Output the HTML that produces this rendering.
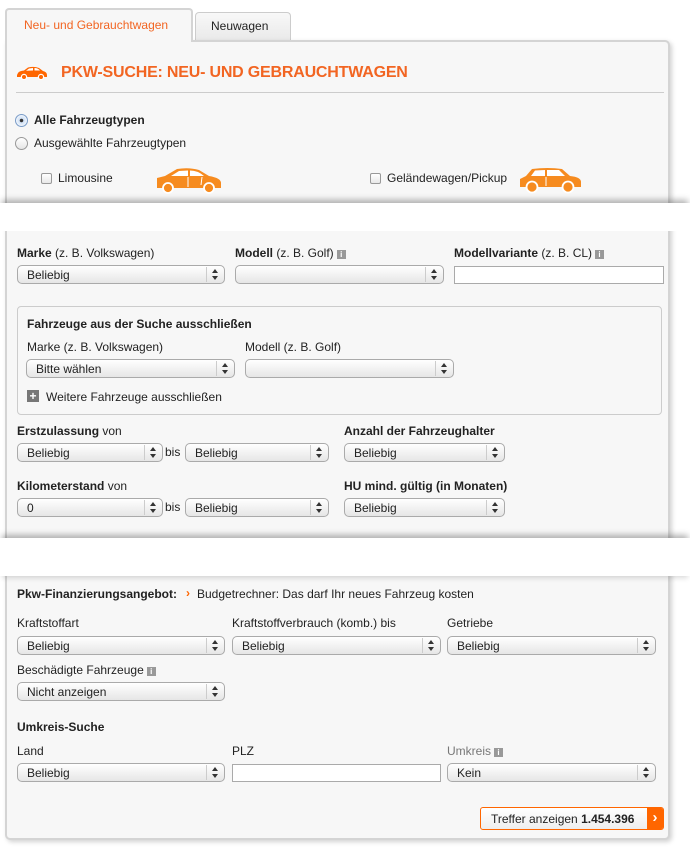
<!DOCTYPE html><html><head><meta charset="utf-8"><style>
*{box-sizing:border-box}
body{margin:0;width:690px;height:854px;background:#fff;font-family:"Liberation Sans",sans-serif;font-size:12px;color:#222;position:relative;overflow:hidden}
.a{position:absolute;white-space:nowrap}
.panel{position:absolute;left:5px;width:665px;background:#f7f7f7;border:2px solid #d4d4d4;box-shadow:2px 2px 5px rgba(0,0,0,.18)}
.sel{position:absolute;height:19px;border:1px solid #aaa;border-radius:5px;background:linear-gradient(#fff,#e6e6e6);font-size:12px;padding:2px 0 0 9px;color:#222}
.sel:after{content:"";position:absolute;right:17px;top:1px;bottom:1px;border-left:1px solid #ccc}
.sel i{position:absolute;right:6px;top:3px;width:0;height:0;border:3px solid transparent;border-bottom:4px solid #333;border-top:0}
.sel b{position:absolute;right:6px;top:10px;width:0;height:0;border:3px solid transparent;border-top:4px solid #333;border-bottom:0}
.inp{position:absolute;height:18px;border:1px solid #aaa;background:#fff}
.bd{font-weight:bold}
.info{display:inline-block;width:9px;height:9px;background:#999;color:#fff;font-size:8px;line-height:9px;text-align:center;font-weight:bold;vertical-align:0;margin-left:3px}
.tear{position:absolute;left:0;width:690px;background:#fff}
.cb{position:absolute;width:11px;height:11px;border:1px solid #999;border-radius:2px;background:linear-gradient(#fff,#e8e8e8)}
</style></head><body>
<div class="a" style="left:5px;top:8px;width:188px;height:34px;background:#f7f7f7;border:2px solid #d4d4d4;border-bottom:none;border-radius:4px 4px 0 0;z-index:2"></div>
<div class="a" style="left:24px;top:18px;color:#f26522;font-size:12px;z-index:3">Neu- und Gebrauchtwagen</div>
<div class="a" style="left:195px;top:12px;width:96px;height:29px;background:linear-gradient(#f8f8f8,#e9e9e9);border:1px solid #ccc;border-bottom:none;border-radius:4px 4px 0 0"></div>
<div class="a" style="left:211px;top:19px;">Neuwagen</div>

<div class="panel" style="top:40px;height:800px;border-radius:0 5px 5px 5px"></div>
<div class="a" style="left:7px;top:40px;width:184px;height:3px;background:#f7f7f7;z-index:2"></div>

<svg class="a" style="left:16px;top:66px" width="32" height="14" viewBox="0 0 32 14"><path d="M2 7 Q3 5 8 4.5 L12 1.5 Q18 0 23 2 L27 5 Q31 6 31 9 L31 11 L1 11 L1 9Z" fill="#f60"/><circle cx="8" cy="11" r="2.6" fill="#f60" stroke="#fff" stroke-width="1.2"/><circle cx="25" cy="11" r="2.6" fill="#f60" stroke="#fff" stroke-width="1.2"/><path d="M13 2.5 L17 2 L17 4.5 L10 4.8Z M18.5 2 Q22 2 24 4.5 L18.5 4.5Z" fill="#fff"/></svg>
<div class="a bd" style="left:61px;top:64px;color:#f26522;font-size:16px;letter-spacing:-0.2px">PKW-SUCHE: NEU- UND GEBRAUCHTWAGEN</div>
<div class="a" style="left:16px;top:92px;width:648px;height:1px;background:#ccc"></div>
<div class="a" style="left:15px;top:114px;width:13px;height:13px;border-radius:50%;border:1px solid #7a9cc8;background:radial-gradient(#333 1.5px,#cfe0f5 2px,#fff 7px)"></div>
<div class="a bd" style="left:34px;top:113px">Alle Fahrzeugtypen</div>
<div class="a" style="left:15px;top:137px;width:13px;height:13px;border-radius:50%;border:1px solid #999;background:linear-gradient(#fff,#e5e5e5)"></div>
<div class="a" style="left:34px;top:136px">Ausgewählte Fahrzeugtypen</div>
<div class="cb" style="left:41px;top:173px"></div>
<div class="a" style="left:58px;top:171px">Limousine</div>
<svg class="a" style="left:155px;top:168px" width="68" height="26" viewBox="0 0 68 26"><path d="M2 13 L2 10 L10 8 L22 1 Q34 -1 44 2 L54 8 Q66 10 66 15 L66 20 L2 20Z" fill="#f68b1f"/><circle cx="13" cy="20" r="5" fill="#f68b1f" stroke="#fff" stroke-width="1.8"/><circle cx="54" cy="20" r="5" fill="#f68b1f" stroke="#fff" stroke-width="1.8"/><path d="M16 8 L24 3 L33 2.5 L33 8Z M35 2.5 Q43 2.5 49 8 L35 8Z" fill="#fff"/><path d="M33 9 L33 19 M47 9 L46 17" stroke="#fff" stroke-width="1"/></svg>
<div class="cb" style="left:370px;top:173px"></div>
<div class="a" style="left:387px;top:171px">Geländewagen/Pickup</div>
<svg class="a" style="left:518px;top:167px" width="66" height="27" viewBox="0 0 66 27"><path d="M2 12 L8 9 L14 2 Q30 0 44 2 L52 9 Q63 10 63 15 L63 20 L2 20Z" fill="#f68b1f"/><circle cx="14" cy="20" r="5.5" fill="#f68b1f" stroke="#fff" stroke-width="1.8"/><circle cx="50" cy="20" r="5.5" fill="#f68b1f" stroke="#fff" stroke-width="1.8"/><path d="M13 9 L17 3.5 L27 3 L27 9Z M29 3 L41 3 L47 9 L29 9Z" fill="#fff"/><path d="M28 10 L28 19" stroke="#fff" stroke-width="1"/></svg>

<div class="tear" style="top:203px;height:28px;box-shadow:0 -5px 6px -2px rgba(0,0,0,.3)"></div>

<div class="a" style="left:17px;top:246px"><span class="bd">Marke</span> (z. B. Volkswagen)</div>
<div class="a" style="left:235px;top:246px"><span class="bd">Modell</span> (z. B. Golf)<span class="info">i</span></div>
<div class="a" style="left:454px;top:246px"><span class="bd">Modellvariante</span> (z. B. CL)<span class="info">i</span></div>
<div class="sel" style="left:17px;top:265px;width:208px">Beliebig<i></i><b></b></div>
<div class="sel" style="left:235px;top:265px;width:209px"><i></i><b></b></div>
<div class="inp" style="left:454px;top:266px;width:210px"></div>

<div class="a" style="left:17px;top:306px;width:645px;height:109px;border:1px solid #ccc;border-radius:4px"></div>
<div class="a bd" style="left:27px;top:317px">Fahrzeuge aus der Suche ausschließen</div>
<div class="a" style="left:27px;top:340px">Marke (z. B. Volkswagen)</div>
<div class="a" style="left:245px;top:340px">Modell (z. B. Golf)</div>
<div class="sel" style="left:26px;top:359px;width:209px">Bitte wählen<i></i><b></b></div>
<div class="sel" style="left:245px;top:359px;width:209px"><i></i><b></b></div>
<div class="a" style="left:27px;top:390px;width:12px;height:12px;background:#777;color:#fff;font-size:12px;line-height:12px;text-align:center;font-weight:bold">+</div>
<div class="a" style="left:46px;top:390px">Weitere Fahrzeuge ausschließen</div>

<div class="a" style="left:17px;top:424px"><span class="bd">Erstzulassung</span> von</div>
<div class="a bd" style="left:344px;top:424px">Anzahl der Fahrzeughalter</div>
<div class="sel" style="left:17px;top:443px;width:146px">Beliebig<i></i><b></b></div>
<div class="a" style="left:165px;top:445px">bis</div>
<div class="sel" style="left:185px;top:443px;width:144px">Beliebig<i></i><b></b></div>
<div class="sel" style="left:344px;top:443px;width:161px">Beliebig<i></i><b></b></div>
<div class="a" style="left:17px;top:479px"><span class="bd">Kilometerstand</span> von</div>
<div class="a bd" style="left:344px;top:479px">HU mind. gültig (in Monaten)</div>
<div class="sel" style="left:17px;top:498px;width:146px">0<i></i><b></b></div>
<div class="a" style="left:165px;top:500px">bis</div>
<div class="sel" style="left:185px;top:498px;width:144px">Beliebig<i></i><b></b></div>
<div class="sel" style="left:344px;top:498px;width:161px">Beliebig<i></i><b></b></div>

<div class="tear" style="top:538px;height:38px;box-shadow:0 -5px 6px -2px rgba(0,0,0,.3),0 4px 5px -2px rgba(0,0,0,.15)"></div>

<div class="a bd" style="left:17px;top:587px">Pkw-Finanzierungsangebot:</div>
<div class="a bd" style="left:186px;top:586px;color:#f60">›</div>
<div class="a" style="left:197px;top:587px">Budgetrechner: Das darf Ihr neues Fahrzeug kosten</div>
<div class="a" style="left:17px;top:616px">Kraftstoffart</div>
<div class="a" style="left:232px;top:616px">Kraftstoffverbrauch (komb.) bis</div>
<div class="a" style="left:447px;top:616px">Getriebe</div>
<div class="sel" style="left:17px;top:636px;width:208px">Beliebig<i></i><b></b></div>
<div class="sel" style="left:232px;top:636px;width:209px">Beliebig<i></i><b></b></div>
<div class="sel" style="left:447px;top:636px;width:209px">Beliebig<i></i><b></b></div>
<div class="a" style="left:17px;top:663px">Beschädigte Fahrzeuge<span class="info">i</span></div>
<div class="sel" style="left:17px;top:682px;width:208px">Nicht anzeigen<i></i><b></b></div>
<div class="a bd" style="left:17px;top:720px">Umkreis-Suche</div>
<div class="a" style="left:17px;top:744px">Land</div>
<div class="a" style="left:232px;top:744px">PLZ</div>
<div class="a" style="left:447px;top:744px;color:#777">Umkreis<span class="info">i</span></div>
<div class="sel" style="left:17px;top:763px;width:208px">Beliebig<i></i><b></b></div>
<div class="inp" style="left:232px;top:764px;width:209px"></div>
<div class="sel" style="left:447px;top:763px;width:209px">Kein<i></i><b></b></div>

<div class="a" style="left:480px;top:807px;width:184px;height:23px;border:1px solid #f60;border-radius:3px;background:linear-gradient(#fff,#eee);overflow:hidden">
<div class="a" style="left:10px;top:4px;font-size:12px">Treffer anzeigen <b>1.454.396</b></div>
<div class="a" style="right:0;top:0;width:16px;height:21px;background:#f60;color:#fff;font-weight:bold;font-size:15px;line-height:20px;text-align:center">›</div>
</div>
</body></html>
